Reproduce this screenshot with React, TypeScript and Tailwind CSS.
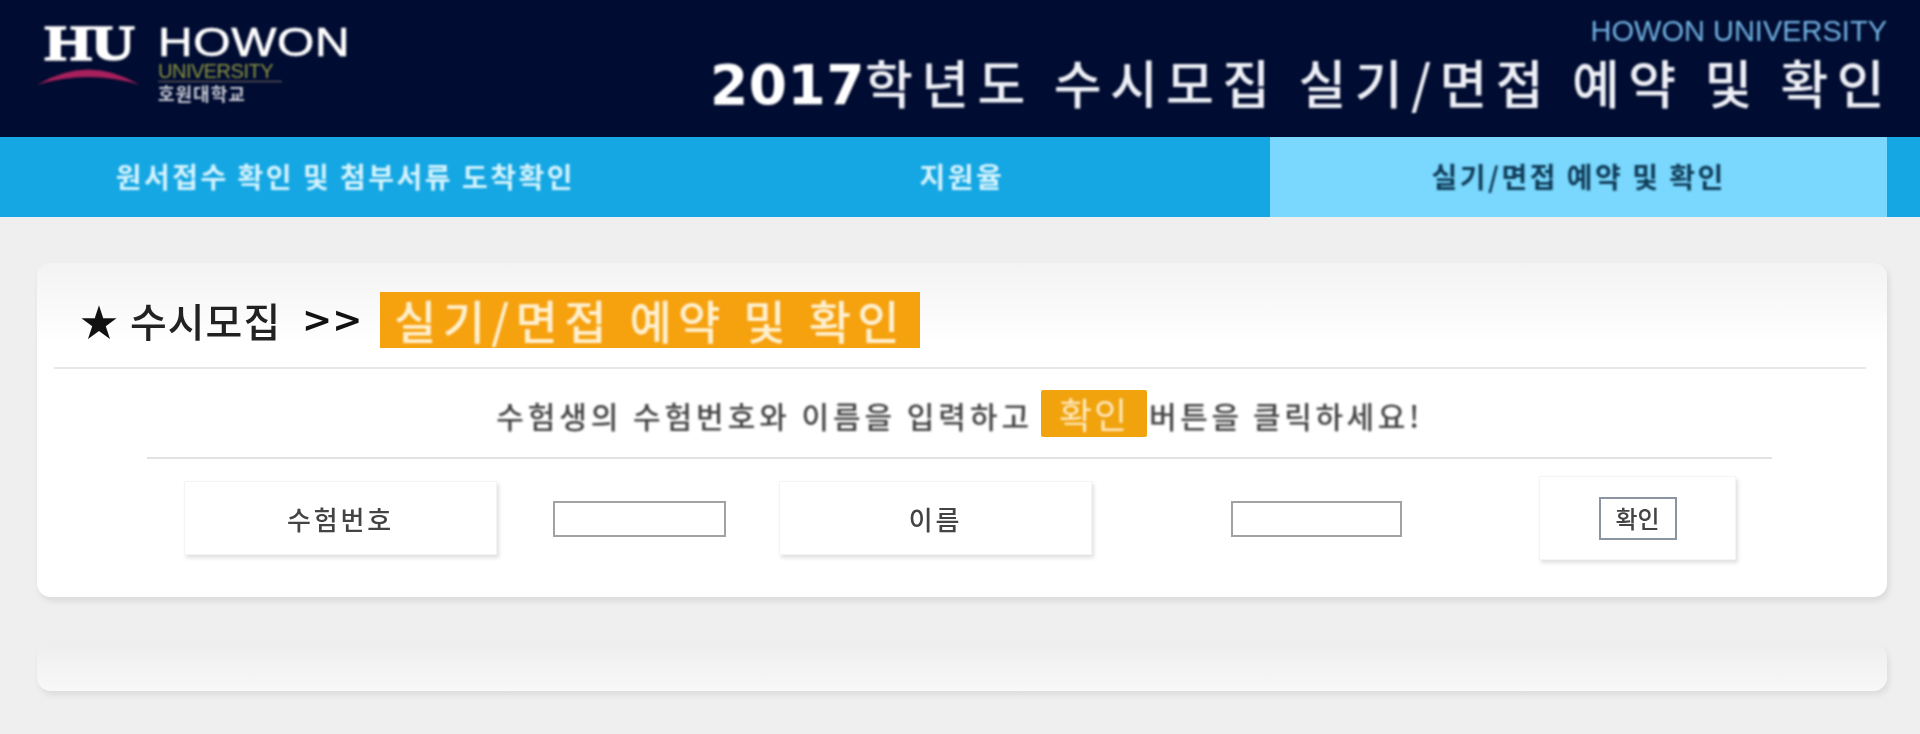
const KR = "font-['Noto_Sans_CJK_KR','Noto_Sans',sans-serif]";
const SANS = "font-['Liberation_Sans',Arial,sans-serif]";

const TABS = ["원서접수 확인 및 첨부서류 도착확인", "지원율", "실기/면접 예약 및 확인"];

function Logo() {
  return (
    <div className="flex items-start gap-[20px] blur-[0.8px]">
      <div className="flex w-[98px] flex-col items-center">
        <div className="h-[42px] scale-x-[1.2] font-['Liberation_Serif',serif] text-[51px] leading-[40px] font-bold tracking-[-1px] text-white [-webkit-text-stroke:1.5px_white]">
          HU
        </div>
        <svg width="106" height="24" viewBox="0 0 106 24" className="mt-[-3px] shrink-0">
          <path d="M1 23 Q 52 -8 104 23 Q 52 7 1 23 Z" fill="#a8205c" />
        </svg>
      </div>
      <div className="mt-[-1px] flex flex-col">
        <div className={`${SANS} w-[160px] origin-left scale-x-[1.17] text-[41px] leading-[40px] tracking-[0.5px] text-white [-webkit-text-stroke:0.6px_white]`}>
          HOWON
        </div>
        <div className={`${SANS} mt-[1px] w-[124px] border-b border-[#7d6b63] pb-[1px] text-[20px] leading-[17px] tracking-[-0.5px] text-[#8c9440]`}>
          UNIVERSITY
        </div>
        <div className={`${KR} mt-[2px] text-[18px] leading-[18px] font-bold tracking-[1px] text-[#c9ccd6]`}>호원대학교</div>
      </div>
    </div>
  );
}

function Header() {
  return (
    <header className="flex h-[137px] items-start justify-between bg-[#000c31] pr-[33px] pl-[40px]">
      <div className="pt-[23px]">
        <Logo />
      </div>
      <div className="flex flex-col items-end pt-[15px] blur-[0.8px]">
        <div className={`${SANS} text-[29px] leading-[32px] text-[#72b3e2]`}>HOWON UNIVERSITY</div>
        <h1 className={`${KR} mt-[3px] mr-[-6px] text-[52px] leading-[64px] font-medium tracking-[8.35px] text-[#eef0f6]`}>
          <span className="font-['DejaVu_Sans',sans-serif] text-[55px] font-bold tracking-[0.5px] text-white">2017</span>
          학년도 수시모집 실기/면접 예약 및 확인
        </h1>
      </div>
    </header>
  );
}

function Nav() {
  return (
    <nav className="grid h-[80px] grid-cols-3 bg-[#15a7e3] pr-[33px] pl-[37px]">
      {TABS.map((tab, i) => (
        <div
          key={tab}
          className={`flex items-center justify-center pb-[3px] ${i === 2 ? "bg-[#7ad7fd] text-[#0f3c58]" : "text-[#d5f3fd]"}`}
        >
          <span className={`${KR} text-[28px] font-bold tracking-[2.5px] blur-[0.9px]`}>{tab}</span>
        </div>
      ))}
    </nav>
  );
}

function LabelCell({ children }: { children: string }) {
  return (
    <div className="flex h-[74px] w-[313px] items-center justify-center border border-[#f4f4f4] bg-white shadow-[2px_3px_4px_rgba(0,0,0,0.12)] blur-[0.4px]">
      <span className={`${KR} text-[26px] font-medium tracking-[2.8px] text-[#444] blur-[0.7px]`}>{children}</span>
    </div>
  );
}

function App() {
  return (
    <div className="h-[734px] w-full overflow-hidden bg-[#efefef]">
      <Header />
      <Nav />
      <main className="flex flex-col gap-[47px] pt-[46px] pr-[33px] pl-[37px]">
        <section className="h-[334px] rounded-[14px] bg-[linear-gradient(#f3f3f3_0%,#ffffff_24%)] shadow-[2px_4px_6px_rgba(0,0,0,0.09)]">
          <div className="mr-[21px] ml-[17px] flex h-[106px] items-center border-b-2 border-[#e8e8e8] pt-[9px] pl-[26px]">
            <span className={`${KR} w-[50px] text-[38px] leading-[56px] text-[#111] blur-[0.6px]`}>★</span>
            <span className={`${KR} w-[172px] text-[40px] leading-[56px] font-medium tracking-[1px] text-[#222] blur-[0.7px]`}>수시모집</span>
            <span className="w-[78px] font-['DejaVu_Sans',sans-serif] text-[36px] leading-[56px] font-bold text-[#111] blur-[0.5px]">
              &gt;&gt;
            </span>
            <span className={`${KR} flex h-[56px] w-[540px] items-center justify-center bg-[#f6a10e] text-[46px] font-medium tracking-[6.3px] text-[#fff0d0]`}>
              <span className="blur-[0.9px]">실기/면접 예약 및 확인</span>
            </span>
          </div>
          <div className="mr-[115px] ml-[110px] flex h-[90px] items-center justify-center gap-[2px] border-b-2 border-[#e2e2e2]">
            <span className={`${KR} pt-[4px] text-[30px] font-medium tracking-[3.95px] text-[#444] blur-[0.8px]`}>
              수험생의 수험번호와 이름을 입력하고
            </span>
            <span className={`${KR} ml-[6px] flex h-[47px] w-[106px] items-center justify-center rounded-[2px] bg-[#f0a30c] text-[36px] tracking-[2px] text-[#ffe9c0]`}>
              <span className="blur-[0.9px]">확인</span>
            </span>
            <span className={`${KR} pt-[4px] text-[30px] font-medium tracking-[3.6px] text-[#444] blur-[0.8px]`}>버튼을 클릭하세요!</span>
          </div>
          <div className="flex items-center pt-[17px] pl-[147px]">
            <LabelCell>수험번호</LabelCell>
            <input className="mt-[2px] mr-[53px] ml-[56px] h-[36px] w-[173px] border-2 border-[#a2a2a2] bg-white blur-[0.4px]" />
            <LabelCell>이름</LabelCell>
            <input className="mt-[2px] ml-[139px] h-[36px] w-[171px] border-2 border-[#a2a2a2] bg-white blur-[0.4px]" />
            <div className="ml-[137px] flex h-[84px] w-[197px] items-center justify-center border border-[#f4f4f4] bg-white shadow-[2px_3px_4px_rgba(0,0,0,0.12)] blur-[0.4px]">
              <button className={`${KR} h-[43px] w-[78px] border-2 border-[#8b95a1] bg-white text-[24px] font-medium text-[#444]`}>
                <span className="inline-block blur-[0.7px]">확인</span>
              </button>
            </div>
          </div>
        </section>
        <section className="h-[47px] rounded-[14px] bg-[linear-gradient(#eeeeee,#f8f8f8)] shadow-[2px_4px_6px_rgba(0,0,0,0.08)]" />
      </main>
    </div>
  );
}

export default App;
